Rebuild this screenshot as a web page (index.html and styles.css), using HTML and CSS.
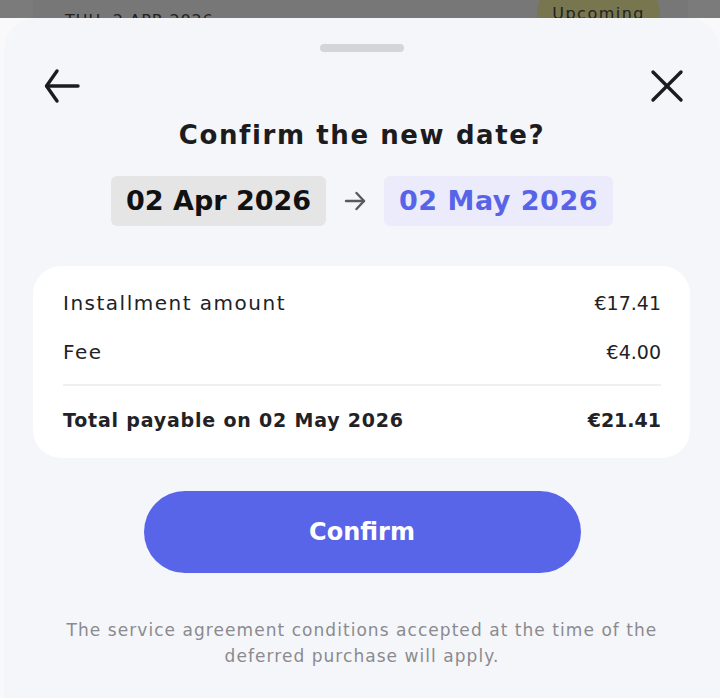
FILE: index.html
```html
<!DOCTYPE html>
<html lang="en">
<head>
    <meta charset="UTF-8">
    <meta name="viewport" content="width=device-width, initial-scale=1.0">
    <title>Confirm the new date</title>
    <link rel="stylesheet" href="styles.css">
</head>
<body>
    <div class="under">
        <div class="under-card">
            <span class="under-date">THU, 2 APR 2026</span>
            <span class="under-badge">Upcoming</span>
        </div>
    </div>

    <div class="sheet">
        <div class="handle"></div>

        <div class="sheet-head">
            <button class="icon-btn" aria-label="Back">
                <svg width="40" height="40" viewBox="0 0 40 40" fill="none" stroke="#1c1c1e" stroke-width="3.4" stroke-linecap="round" stroke-linejoin="round">
                    <path d="M36 20 H5"/>
                    <path d="M15 5 L4.5 20 L15 35"/>
                </svg>
            </button>
            <button class="icon-btn" aria-label="Close">
                <svg width="40" height="40" viewBox="0 0 40 40" fill="none" stroke="#1c1c1e" stroke-width="3.4" stroke-linecap="round">
                    <path d="M6 6 L34 34"/>
                    <path d="M34 6 L6 34"/>
                </svg>
            </button>
        </div>

        <h2 class="title">Confirm the new date?</h2>

        <div class="dates">
            <span class="chip chip-old">02 Apr 2026</span>
            <svg class="dates-arrow" width="22" height="22" viewBox="0 0 22 22" fill="none" stroke="#5a5a5e" stroke-width="2.4" stroke-linecap="round" stroke-linejoin="round">
                <path d="M2 11 H20"/>
                <path d="M12.5 3 L20 11 L12.5 19"/>
            </svg>
            <span class="chip chip-new">02 May 2026</span>
        </div>

        <div class="summary">
            <div class="row">
                <span class="label">Installment amount</span>
                <span>&euro;17.41</span>
            </div>
            <div class="row">
                <span class="label">Fee</span>
                <span>&euro;4.00</span>
            </div>
            <div class="divider"></div>
            <div class="row row-total">
                <span class="label">Total payable on 02 May 2026</span>
                <span>&euro;21.41</span>
            </div>
        </div>

        <button class="confirm">Confirm</button>

        <p class="note">The service agreement conditions accepted at the time of the deferred purchase will apply.</p>
    </div>
</body>
</html>
```

FILE: styles.css
```css
body {
    margin: 0;
    height: 698px;
    overflow: hidden;
    background-color: #f9f9fb;
    font-family: "DejaVu Sans", Inter, sans-serif;
    color: #1c1c1e;
}
.under {
    height: 18px;
    overflow: hidden;
    background-color: #7b7b7b;
}
.under-card {
    margin: 0 32px 0 33px;
    height: 18px;
    background-color: #777;
    display: flex;
    justify-content: space-between;
    align-items: flex-start;
    padding: 0 28px 0 32px;
}
.under-date {
    font-size: 16px;
    letter-spacing: 0.8px;
    color: #222;
    margin-top: 11px;
}
.under-badge {
    background-color: #77764f;
    color: #222;
    font-size: 16px;
    letter-spacing: 1.5px;
    padding: 20px 15px;
    margin-top: -16px;
    border-radius: 40px;
}
.sheet {
    margin-left: 4px;
    height: 680px;
    background-color: #f5f6fa;
    border-radius: 32px 32px 0 0;
    display: flex;
    flex-direction: column;
    align-items: center;
}
.handle {
    width: 84px;
    height: 8px;
    border-radius: 4px;
    background-color: #d5d5d8;
    margin-top: 26px;
}
.sheet-head {
    align-self: stretch;
    display: flex;
    justify-content: space-between;
    padding: 0 33px 0 38px;
    margin-top: 14px;
}
.icon-btn {
    border: none;
    background: none;
    padding: 0;
    width: 40px;
    height: 40px;
    cursor: pointer;
}
.title {
    margin: 12px 0 0;
    font-size: 26px;
    font-weight: 600;
    line-height: 34px;
    letter-spacing: 1.6px;
}
.dates {
    display: flex;
    align-items: center;
    gap: 18px;
    margin-top: 24px;
}
.chip {
    height: 50px;
    line-height: 50px;
    padding: 0 15px;
    border-radius: 6px;
    font-size: 27px;
    font-weight: 600;
}
.chip-old {
    background-color: #e5e5e6;
    color: #111;
}
.chip-new {
    background-color: #ebebfc;
    color: #5864e8;
    letter-spacing: 0.5px;
}
.summary {
    align-self: stretch;
    margin: 40px 30px 0 29px;
    padding: 20px 29px 21px 30px;
    background: white;
    border-radius: 28px;
}
.row {
    display: flex;
    justify-content: space-between;
    font-size: 19px;
    line-height: 34px;
    padding: 0 0 15px;
    color: #222226;
}
.row .label {
    font-size: 20px;
    letter-spacing: 1.5px;
}
.row-total {
    font-weight: 600;
    padding: 0;
}
.row-total .label {
    font-size: 19px;
    letter-spacing: 0.8px;
}
.divider {
    height: 2px;
    background-color: #f0f0f2;
    margin: 0 0 17px;
}
.confirm {
    margin-top: 33px;
    width: 437px;
    height: 82px;
    border: none;
    border-radius: 41px;
    background-color: #5865e8;
    color: white;
    font-family: inherit;
    font-size: 24px;
    font-weight: 700;
    cursor: pointer;
}
.confirm:hover {
    background-color: #4f5cde;
}
.note {
    margin: 44px 40px 0;
    text-align: center;
    font-size: 17px;
    line-height: 26px;
    letter-spacing: 1.05px;
    color: #8a8a8f;
}
```
